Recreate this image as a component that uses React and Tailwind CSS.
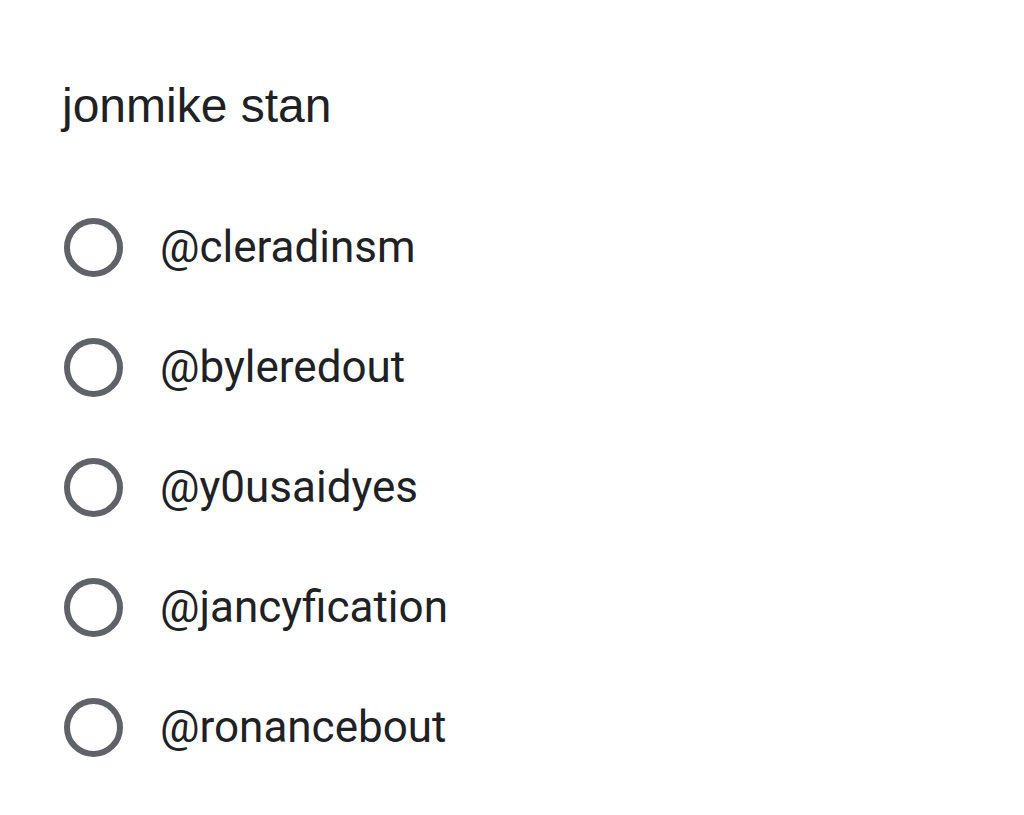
import React from 'react';

const options = ['@cleradinsm', '@byleredout', '@y0usaidyes', '@jancyfication', '@ronancebout'];

export default function App() {
  return (
    <div className="min-h-[815px] w-[1024px] bg-white pl-[62px] pt-[82px]">
      <h1 className="text-[48px] leading-[48px] text-[#202124] font-['Liberation_Sans',Arial,sans-serif]">
        jonmike stan
      </h1>
      <ul className="mt-[57px] flex flex-col">
        {options.map((name) => (
          <li key={name} className="flex h-[120px] items-center">
            <span className="ml-[2px] h-[59px] w-[59px] shrink-0 rounded-full border-[6px] border-[#5f6368]" />
            <span className="ml-[37px] text-[44px] leading-[44px] text-[#202124] font-['Roboto',sans-serif]">
              {name}
            </span>
          </li>
        ))}
      </ul>
    </div>
  );
}
